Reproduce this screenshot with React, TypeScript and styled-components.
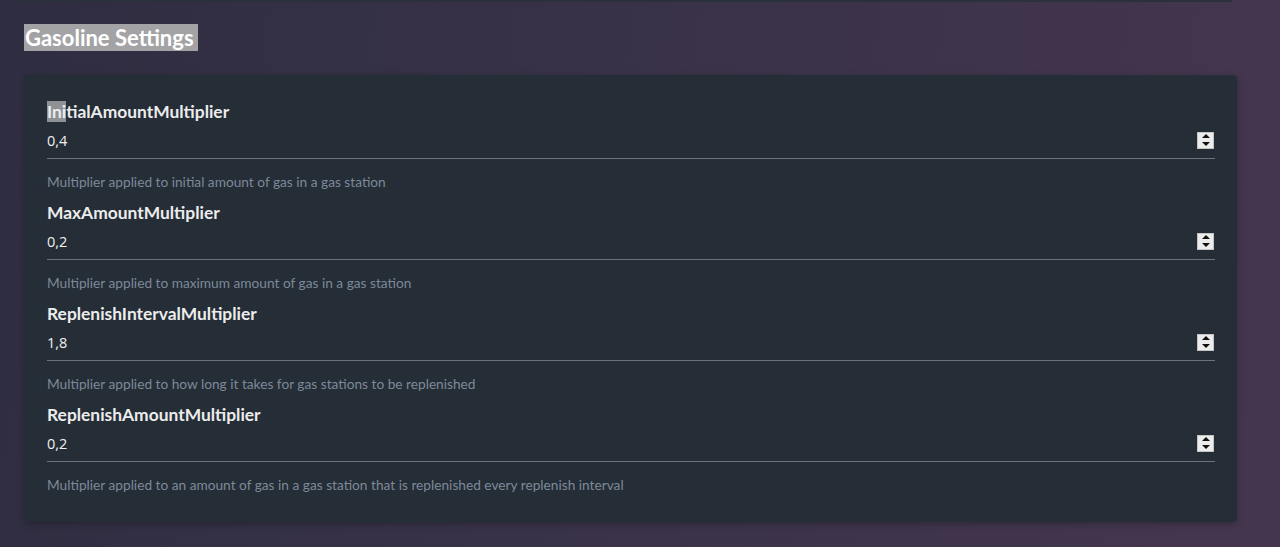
import { createGlobalStyle, styled } from "styled-components";

const GlobalStyle = createGlobalStyle`
  html, body {
    margin: 0;
    padding: 0;
    height: 100%;
  }
  body {
    background: linear-gradient(100deg, #2f2d41 0%, #383248 45%, #45364f 100%);
    font-family: Lato, "Noto Sans", sans-serif;
    color: #ececec;
    overflow: hidden;
  }
`;

const Page = styled.div`
  display: flex;
  flex-direction: column;
  padding: 0 43px 0 25px;
  min-height: 547px;
  box-sizing: border-box;
`;

const PrevEdge = styled.div`
  height: 2px;
  margin: 0 5px 0 -15px;
  background: #2b313c;
`;

const Title = styled.h2`
  margin: 23px 0 0 -1px;
  font-size: 22px;
  line-height: 26px;
  font-weight: 700;
  color: #ffffff;
  align-self: flex-start;
`;

const Selected = styled.span`
  background: #a3a3a6;
  padding: 0 4px 0 1px;
`;

const Card = styled.section`
  margin-top: 24px;
  background: #252d37;
  border-radius: 4px;
  box-shadow: 0 2px 6px rgba(0, 0, 0, 0.25);
  padding: 26px 22px 28px 22px;
  display: flex;
  flex-direction: column;
  gap: 11px;
`;

const Field = styled.div`
  display: flex;
  flex-direction: column;
`;

const Label = styled.label`
  font-size: 17.4px;
  font-weight: 700;
  line-height: 22px;
  color: #ececec;
`;

const LabelMark = styled.span`
  background: #8e9196;
`;

const InputRow = styled.div`
  margin-top: 4px;
  height: 31px;
  display: flex;
  align-items: center;
  border-bottom: 1px solid #6b737d;
`;

const Value = styled.input`
  flex: 1;
  background: transparent;
  border: 0;
  outline: none;
  padding: 0 0 4px 0;
  font-family: "Open Sans", "Noto Sans", sans-serif;
  font-size: 14.5px;
  color: #f0f0f0;
`;

const Spinner = styled.span`
  width: 17px;
  height: 17px;
  box-sizing: border-box;
  background: #ececec;
  border: 1px solid #c4c4c4;
  display: flex;
  flex-direction: column;
  justify-content: space-around;
  align-items: center;
  margin-right: 1px;
  margin-bottom: 5px;
`;

const Arrow = styled.span<{ $down?: boolean }>`
  width: 0;
  height: 0;
  border-left: 4px solid transparent;
  border-right: 4px solid transparent;
  ${(p) =>
    p.$down
      ? "border-top: 4px solid #111;"
      : "border-bottom: 4px solid #111;"}
`;

const Help = styled.div`
  margin-top: 14px;
  font-size: 13.7px;
  line-height: 18px;
  color: #7d8999;
`;

const fields = [
  {
    name: "InitialAmountMultiplier",
    value: "0,4",
    help: "Multiplier applied to initial amount of gas in a gas station",
  },
  {
    name: "MaxAmountMultiplier",
    value: "0,2",
    help: "Multiplier applied to maximum amount of gas in a gas station",
  },
  {
    name: "ReplenishIntervalMultiplier",
    value: "1,8",
    help: "Multiplier applied to how long it takes for gas stations to be replenished",
  },
  {
    name: "ReplenishAmountMultiplier",
    value: "0,2",
    help: "Multiplier applied to an amount of gas in a gas station that is replenished every replenish interval",
  },
];

export default function App() {
  return (
    <>
      <GlobalStyle />
      <Page>
        <PrevEdge />
        <Title>
          <Selected>Gasoline Settings</Selected>
        </Title>
        <Card>
          {fields.map((f, i) => (
            <Field key={f.name}>
              <Label>
                {i === 0 ? (
                  <>
                    <LabelMark>Ini</LabelMark>
                    {f.name.slice(3)}
                  </>
                ) : (
                  f.name
                )}
              </Label>
              <InputRow>
                <Value type="text" defaultValue={f.value} />
                <Spinner>
                  <Arrow />
                  <Arrow $down />
                </Spinner>
              </InputRow>
              <Help>{f.help}</Help>
            </Field>
          ))}
        </Card>
      </Page>
    </>
  );
}
